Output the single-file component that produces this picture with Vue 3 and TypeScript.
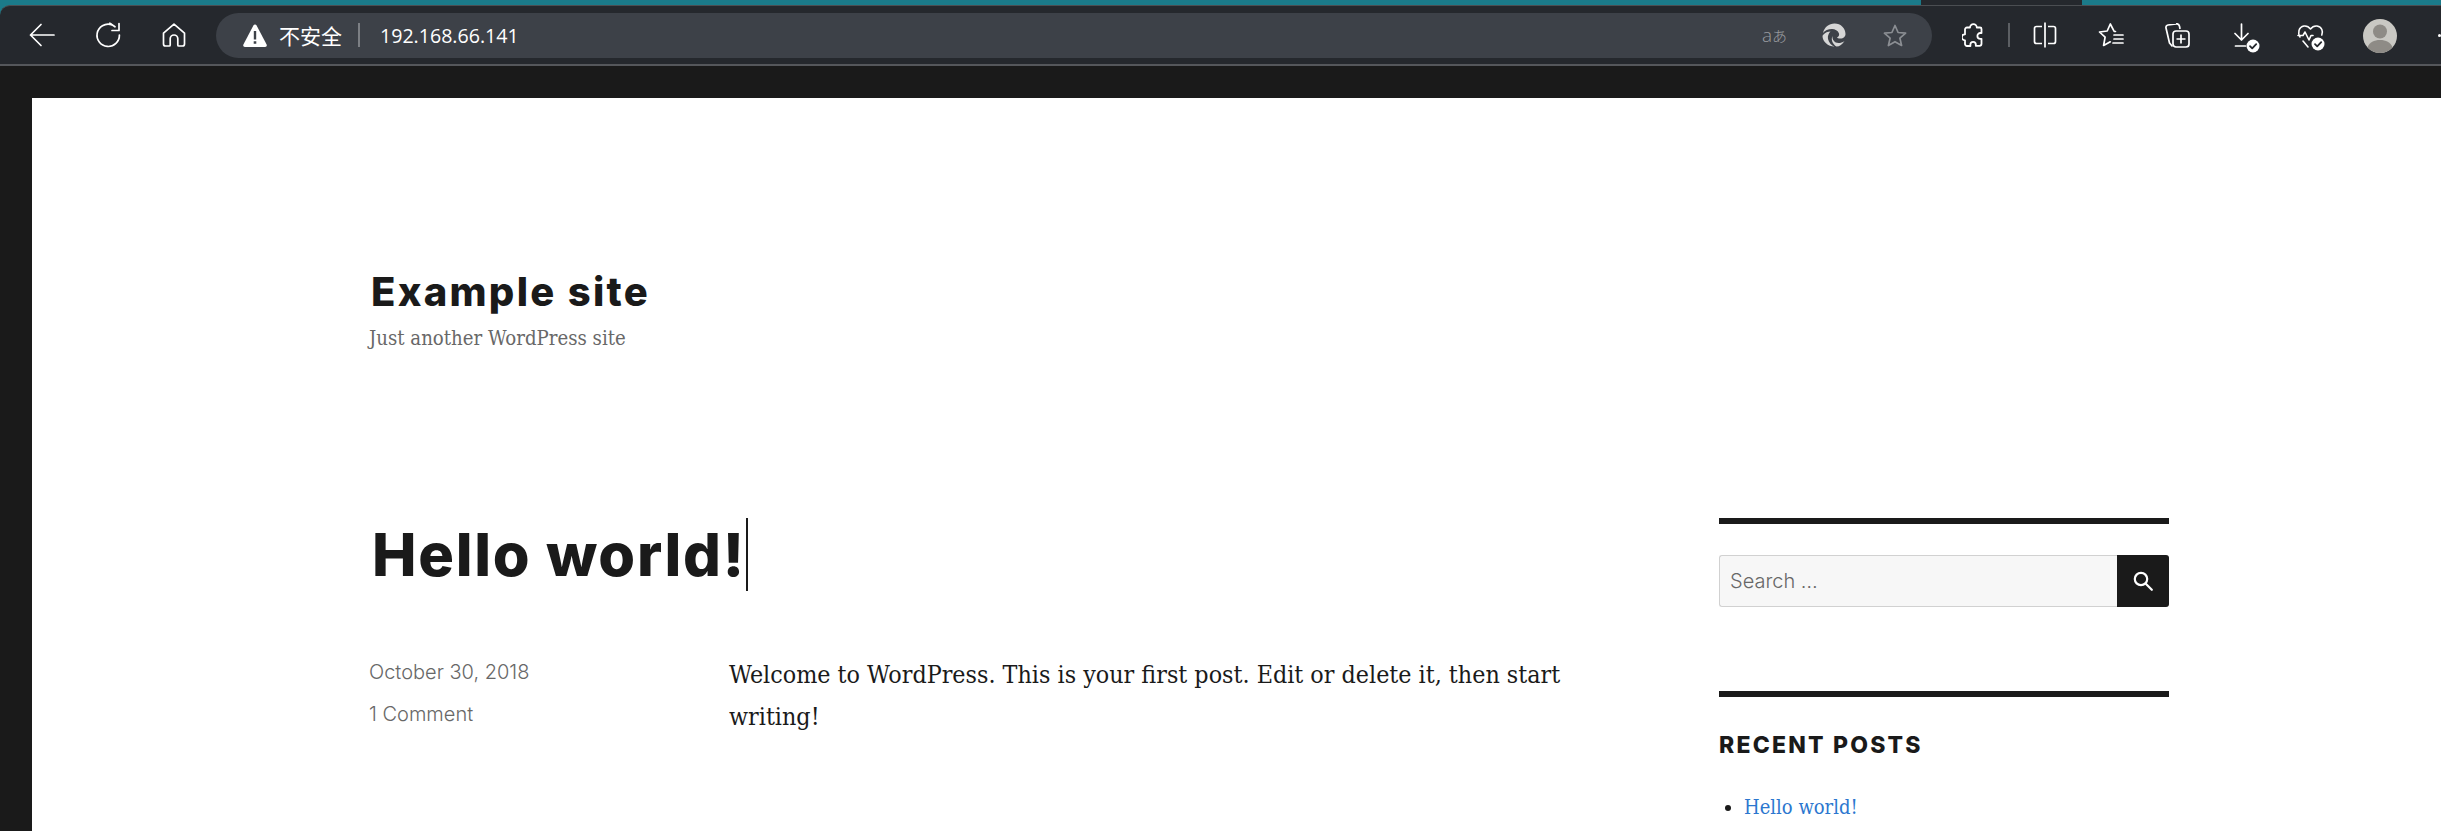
<script setup lang="ts">
/**
 * Browser window showing a WordPress "Twenty Sixteen" home page
 */
const address = '192.168.66.141'
</script>

<template>
  <div class="window">
    <div class="tabstrip">
      <div class="tab-rest"></div>
      <div class="tab-gap"></div>
      <div class="tab-end"></div>
    </div>

    <header class="toolbar">
      <button class="tool" aria-label="Back">
        <svg width="26" height="24" viewBox="0 0 26 24" fill="none" stroke="#fff" stroke-width="1.7" stroke-linecap="round" stroke-linejoin="round">
          <path d="M1.5 12H25M12 1.5 1.5 12 12 22.5" />
        </svg>
      </button>
      <button class="tool" aria-label="Reload">
        <svg width="26" height="26" viewBox="0 0 26 26" fill="none" stroke="#fff" stroke-width="1.7" stroke-linecap="round" stroke-linejoin="round">
          <path d="M16.5 2.6A11.2 11.2 0 1 0 24.4 13" />
          <path d="M14.8 1.2 20 4.8M24 1.5v7h-7" />
        </svg>
      </button>
      <button class="tool" aria-label="Home">
        <svg width="24" height="24" viewBox="0 0 24 24" fill="none" stroke="#fff" stroke-width="1.7" stroke-linejoin="round">
          <path d="M12 1.2 1.5 10.2V21a2 2 0 0 0 2 2h3.7a1 1 0 0 0 1-1v-6.200a3.800 3.800 0 0 1 7.600 0V22a1 1 0 0 0 1 1h3.700a2 2 0 0 0 2-2V10.200Z" />
        </svg>
      </button>

      <div class="omnibox">
        <svg class="warn" width="24" height="23" viewBox="0 0 24 23">
          <path d="M12 0.5c.7 0 1.200.4 1.600 1l10 19c.6 1.200-.2 2.500-1.500 2.500H1.900C.6 23-.2 21.700.4 20.500l10-19c.4-.6.900-1 1.600-1Z" fill="#fff" />
          <path d="M10.800 7h2.400v8.500h-2.400ZM10.700 17.200h2.600v2.600h-2.600Z" fill="#3d4148" />
        </svg>
        <span class="insecure">不安全</span>
        <span class="omni-sep"></span>
        <span class="url">{{ address }}</span>

        <span class="translate">a<span class="kana">あ</span></span>
        <svg class="edge" width="24" height="24" viewBox="0 0 24 24" fill="#d6d6d6">
          <path d="M1 10C2.500 4 7 .5 12.500 .5 19 .5 23.500 5.500 23.500 11c0 2.500-2 4.500-5 4.500-2 0-3.500-.5-3.500-1 1.500-.7 2.500-2 2-4C16 7.500 13 6 10 6 6 6 3 7.500 1 10Z" />
          <path d="M1 12c2-2.500 5-3.500 7.500-3.500-2 2-3 4.500-2.500 7.500.8 3.500 3.500 6.500 6.500 7.500C6 23.500.5 18.500.5 13Z" />
          <path d="M10.500 13c-.5 3.500 2 7 6 7 2 0 4-.5 6-2-2 3.500-5 5.500-8 5.500-3.500-2-6-6.500-4-10.500Z" />
        </svg>
        <svg class="omni-star" width="24" height="23" viewBox="0 0 24 23" fill="none" stroke="#8b8e93" stroke-width="1.700" stroke-linejoin="round">
          <path d="m12 1.500 3.100 7 7.500.7-5.700 5 1.700 7.300L12 17.700 5.400 21.500l1.700-7.300-5.700-5 7.500-.7Z" />
        </svg>
      </div>

      <button class="tool first-right" aria-label="Extensions">
        <svg width="22" height="25" viewBox="0 0 22 25" fill="none" stroke="#fff" stroke-width="1.800" stroke-linejoin="round">
          <path d="M8 4.500a3.400 3.400 0 0 1 6.800 0H18a1.500 1.500 0 0 1 1.500 1.500v4h-1.200a2.900 2.900 0 0 0 0 5.800h1.200v5a2 2 0 0 1-2 2h-3.700v-1.300a2.700 2.700 0 0 0-5.400 0V23H5a2 2 0 0 1-2-2v-3.700H2.800a3 3 0 0 1 0-6H3V6.500a2 2 0 0 1 2-2Z" />
        </svg>
      </button>
      <span class="tool-sep"></span>
      <button class="tool" aria-label="Split screen">
        <svg width="24" height="26" viewBox="0 0 24 26" fill="none" stroke="#fff" stroke-width="1.700">
          <path d="M9 4.500H3.500a2 2 0 0 0-2 2v13a2 2 0 0 0 2 2H9M15 4.500h5.500a2 2 0 0 1 2 2v13a2 2 0 0 1-2 2H15M12 .5v25" />
        </svg>
      </button>
      <button class="tool" aria-label="Favorites">
        <svg width="26" height="24" viewBox="0 0 26 24" fill="none" stroke="#fff" stroke-width="1.700" stroke-linejoin="round" stroke-linecap="round">
          <path d="m17.500 8.500-1.300-.1L12.300 1 9.200 8 1.500 9l5.600 5.200-1.500 8.300 6.700-3.700" />
          <path d="M16 12h9M16 16h9M15 20h10" />
        </svg>
      </button>
      <button class="tool" aria-label="Collections">
        <svg width="25" height="25" viewBox="0 0 25 25" fill="none" stroke="#fff" stroke-width="1.700" stroke-linejoin="round">
          <path d="M7.500 23.500 4.500 20 1 5a2.500 2.500 0 0 1 2-3L11 .9a3 3 0 0 1 3.500 2.300L15 6" />
          <rect x="8" y="8" width="16" height="16" rx="3" />
          <path d="M16 11.500v9M11.500 16h9" />
        </svg>
      </button>
      <button class="tool" aria-label="Downloads">
        <svg class="shift-dl" width="26" height="30" viewBox="0 0 26 30" fill="none" stroke="#fff" stroke-width="1.700" stroke-linecap="round" stroke-linejoin="round">
          <path d="M7.500 1v16M1 10.500l6.500 6.500 6.500-6.500M1.500 23h10" />
          <circle cx="19" cy="23" r="6.500" fill="#fff" stroke="none" />
          <path d="m16 23.200 2.200 2.200 4-4.200" stroke="#25282d" stroke-width="1.800" />
        </svg>
      </button>
      <button class="tool" aria-label="Browser essentials">
        <svg class="shift-heart" width="28" height="27" viewBox="0 0 28 27" fill="none" stroke="#fff" stroke-width="1.600" stroke-linecap="round" stroke-linejoin="round">
          <path d="M3 13C.5 9 1.500 3 7 2c3-.4 5 1 6.500 3C15 3 17 1.600 20 2c5 .7 6.300 5.500 4.800 9" />
          <path d="M1 11.500h5l2-3.500 4 8 2-4.500h2M6 17l5 6" />
          <circle cx="21" cy="20" r="6.500" fill="#fff" stroke="none" />
          <path d="m18 20.200 2.200 2.200 4-4.200" stroke="#25282d" stroke-width="1.800" />
        </svg>
      </button>
      <div class="avatar">
        <svg width="34" height="34" viewBox="0 0 34 34">
          <circle cx="17" cy="17" r="17" fill="#c9c8c3" />
          <circle cx="17" cy="12.500" r="7" fill="#8e8b86" />
          <path d="M4.500 28.500C6.500 23 11 21 17 21s10.500 2 12.500 7.500A17 17 0 0 1 17 34 17 17 0 0 1 4.500 28.500Z" fill="#8e8b86" />
        </svg>
      </div>
      <span class="more-dot"></span>
    </header>

    <div class="viewport">
      <main class="site">
        <div class="branding">
          <h1 class="site-title">Example site</h1>
          <p class="tagline">Just another WordPress site</p>
        </div>

        <div class="columns">
          <article class="post">
            <h2 class="post-title">Hello world!<span class="caret"></span></h2>
            <div class="post-body">
              <footer class="meta">
                <span>October 30, 2018</span>
                <span>1 Comment</span>
              </footer>
              <p class="content">Welcome to WordPress. This is your first post. Edit or delete it, then start writing!</p>
            </div>
          </article>

          <aside class="sidebar">
            <section class="widget search-widget">
              <form class="search" @submit.prevent>
                <input class="search-field" type="search" placeholder="Search …" />
                <button class="search-btn" aria-label="Search">
                  <svg width="20" height="20" viewBox="0 0 20 20" fill="none" stroke="#fff" stroke-width="2.200">
                    <circle cx="8" cy="8" r="6.200" />
                    <path d="m12.500 12.500 6.300 6.300" stroke-linecap="round" />
                  </svg>
                </button>
              </form>
            </section>
            <section class="widget">
              <h3 class="widget-title">RECENT POSTS</h3>
              <ul class="recent">
                <li>Hello world!</li>
              </ul>
            </section>
          </aside>
        </div>
      </main>
    </div>
  </div>
</template>

<style scoped>
.window {
  width: 2441px;
  height: 831px;
  overflow: hidden;
  display: flex;
  flex-direction: column;
  background: linear-gradient(#1b7b8a 20px, #1a1a1a 20px);
}

.tabstrip {
  display: flex;
  height: 5px;
  flex: none;
}

.tab-rest,
.tab-end {
  background: #1b7b8a;
}

.tab-rest {
  width: 1921px;
  border-bottom-right-radius: 4px;
}

.tab-gap {
  width: 161px;
  background: #25282d;
}

.tab-end {
  flex: 1;
  border-bottom-left-radius: 4px;
}

.toolbar {
  flex: none;
  box-sizing: border-box;
  height: 61px;
  padding-left: 9px;
  display: flex;
  align-items: center;
  background: #25282d;
  border-top: 1px solid #4b4e52;
  border-bottom: 2px solid #55575b;
  border-top-left-radius: 10px;
}

.tool {
  flex: none;
  width: 66px;
  height: 45px;
  padding: 0;
  border: 0;
  background: none;
  display: flex;
  align-items: center;
  justify-content: center;
}

.omnibox {
  flex: none;
  box-sizing: border-box;
  width: 1716px;
  height: 45px;
  margin-left: 9px;
  padding-left: 27px;
  display: flex;
  align-items: center;
  background: #3d4148;
  border-radius: 23px;
  font-family: "Open Sans", "Noto Sans CJK SC", sans-serif;
  color: #fff;
  font-size: 19.6px;
}

.insecure {
  margin-left: 12px;
  font-family: "Noto Sans CJK SC", sans-serif;
  font-size: 21px;
}

.omni-sep {
  width: 2px;
  height: 24px;
  margin: 0 20px 0 16px;
  background: #7c7f84;
}

.url {
  width: 136px;
  white-space: nowrap;
}

.translate {
  margin-left: 1246px;
  width: 24px;
  color: #9a9ca0;
  font-family: "Open Sans", sans-serif;
  font-size: 19px;
  font-weight: 300;
  white-space: nowrap;
  display: flex;
  align-items: center;
}

.kana {
  font-family: "Noto Sans CJK JP", sans-serif;
  font-size: 15px;
}

.edge {
  margin-left: 36px;
}

.omni-star {
  margin-left: 37px;
}

.first-right {
  margin-left: 8px;
}

.tool-sep {
  width: 2px;
  height: 24px;
  margin: 0 2px;
  background: #5c5f63;
  flex: none;
}

.shift-dl {
  transform: translate(4px, 3px);
}

.shift-heart {
  transform: translate(2px, 2px);
}

.avatar {
  width: 34px;
  height: 34px;
  margin-left: 21px;
  flex: none;
  margin-top: 1px;
}

.more-dot {
  width: 3px;
  height: 3px;
  margin-left: 41px;
  border-radius: 50%;
  background: #fff;
  flex: none;
}

.viewport {
  flex: 1;
  margin-top: 32px;
  padding-left: 32px;
  min-height: 0;
}

.site {
  box-sizing: border-box;
  height: 100%;
  background: #fff;
  padding: 170px 0 0 337px;
  color: #1a1a1a;
}

.site-title {
  margin: 0;
  font: 800 40px/48px Inter, sans-serif;
  letter-spacing: 2.300px;
  padding-left: 2px;
}

.tagline {
  margin: 8px 0 0;
  font: 400 20.200px/28px "DejaVu Serif Condensed", "DejaVu Serif", serif;
  color: #686868;
}

.columns {
  display: flex;
  margin-top: 166px;
}

.post {
  width: 1350px;
  flex: none;
}

.post-title {
  margin: 0;
  padding: 0 0 0 3px;
  font: 800 59.500px/73px Inter, sans-serif;
  letter-spacing: 1.700px;
  display: flex;
}

.caret {
  width: 2px;
  height: 73px;
  background: #1a1a1a;
}

.post-body {
  display: flex;
  margin-top: 63px;
}

.meta {
  width: 360px;
  flex: none;
  display: flex;
  flex-direction: column;
  gap: 14px;
  font: 300 20px/28px Inter, sans-serif;
  color: #686868;
  padding-top: 4px;
}

.content {
  width: 850px;
  margin: 0;
  font: 400 24.800px/41.500px "DejaVu Serif Condensed", "DejaVu Serif", serif;
  color: #1a1a1a;
}

.sidebar {
  width: 450px;
  flex: none;
}

.widget {
  border-top: 6px solid #1a1a1a;
}

.search-widget {
  box-sizing: border-box;
  height: 173px;
  padding-top: 31px;
}

.search {
  display: flex;
  height: 52px;
}

.search-field {
  flex: 1;
  min-width: 0;
  box-sizing: border-box;
  height: 52px;
  padding: 0 10px;
  background: #f7f7f7;
  border: 1px solid #d1d1d1;
  border-right: 0;
  border-radius: 3px 0 0 3px;
  font: 300 20px Inter, sans-serif;
  color: #686868;
  outline: none;
  appearance: none;
}

.search-field::placeholder {
  color: #686868;
  opacity: 1;
}

.search-btn {
  width: 52px;
  height: 52px;
  padding: 0;
  border: 0;
  border-radius: 0 3px 3px 0;
  background: #1a1a1a;
  display: flex;
  align-items: center;
  justify-content: center;
}

.widget-title {
  margin: 32px 0 0;
  font: 800 23px/32px Inter, sans-serif;
  letter-spacing: 2.200px;
}

.recent {
  margin: 31px 0 0;
  padding: 0 0 0 25px;
  font: 400 20px/30px "DejaVu Serif Condensed", "DejaVu Serif", serif;
  color: #2b77cf;
}

.recent li::marker {
  color: #1a1a1a;
}
</style>

<style>
body {
  margin: 0;
  background: #1a1a1a;
}
</style>
